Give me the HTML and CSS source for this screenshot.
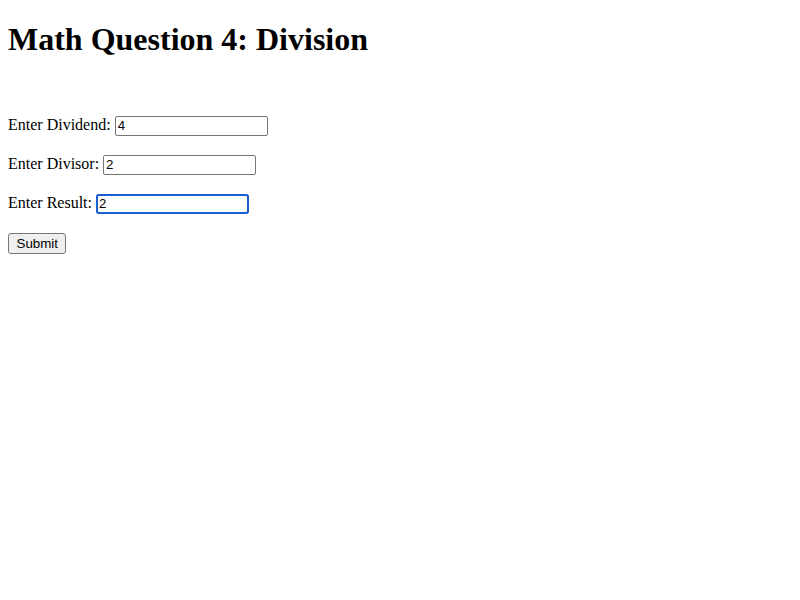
FILE: index.html
```html
<!DOCTYPE html>
<html>
<head>
<meta charset="utf-8">
<title>Math Question 4: Division</title>
<link rel="stylesheet" href="styles.css">
</head>
<body>
<h1 class="title">Math Question 4: Division</h1>
<br>
<form class="quiz">
  <p class="row"><label>Enter Dividend: <input class="field" type="text" value="4"></label></p>
  <p class="row"><label>Enter Divisor: <input class="field" type="text" value="2"></label></p>
  <p class="row"><label>Enter Result: <input class="field focused" type="text" value="2"></label></p>
  <p class="row"><button class="submit" type="button">Submit</button></p>
</form>
</body>
</html>
```
FILE: styles.css
```css
body {
  margin: 8px;
  font-family: "Liberation Serif", "Times New Roman", serif;
  font-size: 16px;
  color: #000;
  background: #fff;
}
.title {
  font-size: 32px;
  font-weight: bold;
  margin: 13.44px 0 21.44px;
}
.quiz {
  margin: 0;
}
.row {
  margin: 16px 0;
}
.field {
  font-family: "Liberation Sans", Arial, sans-serif;
  font-size: 13.333px;
  width: 147px;
  height: 16px;
  margin: 2px 0 1px;
  padding: 1px 2px;
  border: 1px solid #767676;
  border-radius: 2px;
  box-sizing: content-box;
  color: #000;
  background: #fff;
}
.focused {
  outline: 2px solid #1a5fd3;
  outline-offset: -2px;
  border-radius: 3px;
}
.submit {
  font-family: "Liberation Sans", Arial, sans-serif;
  font-size: 13.333px;
  margin: 2px 0 1px;
  padding: 2px 7.5px;
  border: 1px solid #767676;
  border-radius: 3px;
  background: #efefef;
  color: #000;
}
```
